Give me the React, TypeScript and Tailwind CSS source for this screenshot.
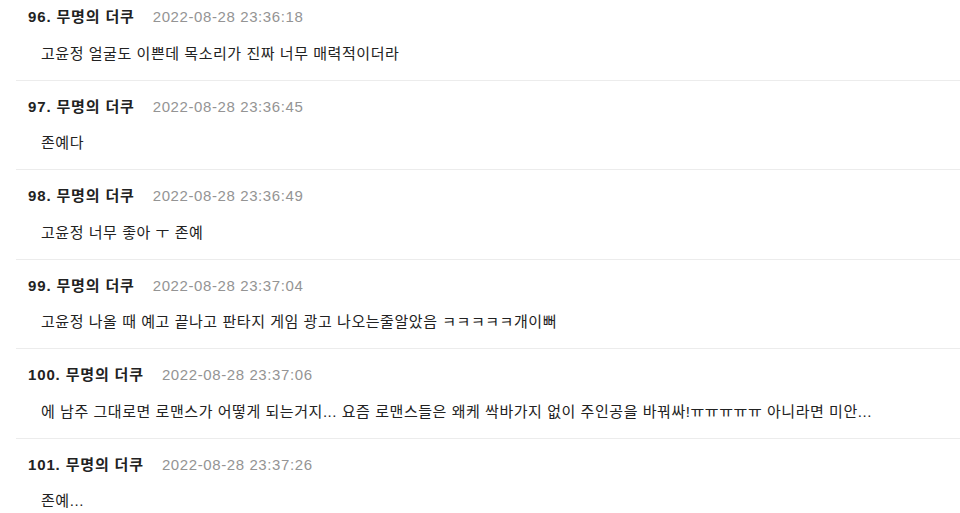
const comments = [
  { no: 96, name: '무명의 더쿠', date: '2022-08-28 23:36:18', body: '고윤정 얼굴도 이쁜데 목소리가 진짜 너무 매력적이더라' },
  { no: 97, name: '무명의 더쿠', date: '2022-08-28 23:36:45', body: '존예다' },
  { no: 98, name: '무명의 더쿠', date: '2022-08-28 23:36:49', body: '고윤정 너무 좋아 ㅜ 존예' },
  { no: 99, name: '무명의 더쿠', date: '2022-08-28 23:37:04', body: '고윤정 나올 때 예고 끝나고 판타지 게임 광고 나오는줄알았음 ㅋㅋㅋㅋㅋ개이뻐' },
  {
    no: 100,
    name: '무명의 더쿠',
    date: '2022-08-28 23:37:06',
    body: '에 남주 그대로면 로맨스가 어떻게 되는거지... 요즘 로맨스들은 왜케 싹바가지 없이 주인공을 바꿔싸!ㅠㅠㅠㅠㅠ 아니라면 미안...',
  },
  { no: 101, name: '무명의 더쿠', date: '2022-08-28 23:37:26', body: '존예...' },
];

export default function App() {
  return (
    <div
      className="w-[960px] h-[513px] overflow-hidden bg-white"
      style={{ fontFamily: '"Liberation Sans", "Noto Sans CJK KR", sans-serif' }}
    >
      <ul className="ml-4">
        {comments.map((c, i) => (
          <li
            key={c.no}
            className={`border-b border-[#ececec] pb-[16px] ${i === 0 ? 'pt-[7px]' : 'pt-4'}`}
          >
            <div className="flex items-baseline pl-[12px] h-5 leading-5">
              <span className="text-[15px] font-bold tracking-[0.85px] text-[#222]">
                {c.no}. {c.name}
              </span>
              <span className="ml-[18px] text-[15px] tracking-[0.6px] text-[#949494]">{c.date}</span>
            </div>
            <p className="mt-[16.5px] pl-[25px] h-5 leading-5 text-[15px] tracking-[0.55px] text-[#222]">
              {c.body}
            </p>
          </li>
        ))}
      </ul>
    </div>
  );
}
